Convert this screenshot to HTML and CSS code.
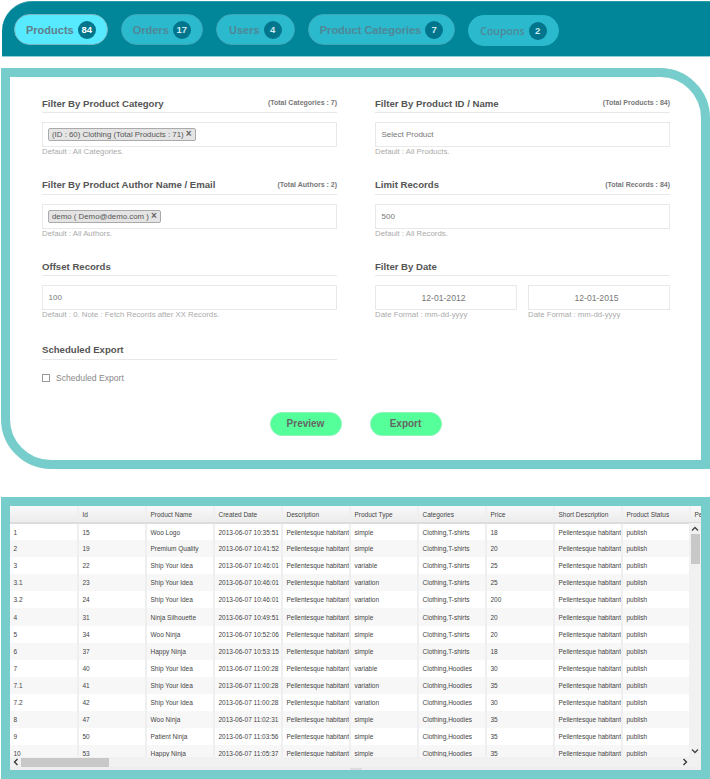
FILE: index.html
```html
<!DOCTYPE html>
<html lang="en">
<head>
<meta charset="utf-8">
<title>Export</title>
<link rel="stylesheet" href="styles.css">
</head>
<body>
<nav class="tabs">
  <a class="tab tab-active">Products<span class="badge">84</span></a>
  <a class="tab">Orders<span class="badge">17</span></a>
  <a class="tab tab-users">Users<span class="badge">4</span></a>
  <a class="tab">Product Categories<span class="badge">7</span></a>
  <a class="tab tab-alt">Coupons<span class="badge">2</span></a>
</nav>

<section class="panel form-panel">
  <div class="form-grid">
    <div class="field">
      <div class="field-head"><h3>Filter By Product Category</h3><span class="total">(Total Categories : 7)</span></div>
      <div class="control"><span class="chip">(ID : 60) Clothing (Total Products : 71) <b>×</b></span></div>
      <p class="help">Default : All Categories.</p>
    </div>
    <div class="field">
      <div class="field-head"><h3>Filter By Product ID / Name</h3><span class="total">(Total Products : 84)</span></div>
      <div class="control text">Select Product</div>
      <p class="help">Default : All Products.</p>
    </div>
    <div class="field">
      <div class="field-head"><h3>Filter By Product Author Name / Email</h3><span class="total">(Total Authors : 2)</span></div>
      <div class="control"><span class="chip">demo ( Demo@demo.com ) <b>×</b></span></div>
      <p class="help">Default : All Authors.</p>
    </div>
    <div class="field">
      <div class="field-head"><h3>Limit Records</h3><span class="total">(Total Records : 84)</span></div>
      <div class="control text">500</div>
      <p class="help">Default : All Records.</p>
    </div>
    <div class="field">
      <div class="field-head"><h3>Offset Records</h3></div>
      <div class="control text">100</div>
      <p class="help">Default : 0. Note : Fetch Records after XX Records.</p>
    </div>
    <div class="field">
      <div class="field-head"><h3>Filter By Date</h3></div>
      <div class="dates">
        <div><div class="control text center">12-01-2012</div><p class="help">Date Format : mm-dd-yyyy</p></div>
        <div><div class="control text center">12-01-2015</div><p class="help">Date Format : mm-dd-yyyy</p></div>
      </div>
    </div>
    <div class="field field-last">
      <div class="field-head"><h3>Scheduled Export</h3></div>
      <label class="check"><span class="box"></span>Scheduled Export</label>
    </div>
  </div>
  <div class="actions">
    <button class="btn">Preview</button>
    <button class="btn">Export</button>
  </div>
</section>

<section class="panel table-panel">
  <div class="grid-main">
    <div class="viewport">
      <table class="data">
        <thead><tr><th></th><th>Id</th><th>Product Name</th><th>Created Date</th><th>Description</th><th>Product Type</th><th>Categories</th><th>Price</th><th>Short Description</th><th>Product Status</th><th>Pe</th></tr></thead>
        <tbody>
          <tr><td>1</td><td>15</td><td>Woo Logo</td><td>2013-06-07 10:35:51</td><td>Pellentesque habitant</td><td>simple</td><td>Clothing,T-shirts</td><td>18</td><td>Pellentesque habitant</td><td>publish</td><td></td></tr>
          <tr><td>2</td><td>19</td><td>Premium Quality</td><td>2013-06-07 10:41:52</td><td>Pellentesque habitant</td><td>simple</td><td>Clothing,T-shirts</td><td>20</td><td>Pellentesque habitant</td><td>publish</td><td></td></tr>
          <tr><td>3</td><td>22</td><td>Ship Your Idea</td><td>2013-06-07 10:46:01</td><td>Pellentesque habitant</td><td>variable</td><td>Clothing,T-shirts</td><td>25</td><td>Pellentesque habitant</td><td>publish</td><td></td></tr>
          <tr><td>3.1</td><td>23</td><td>Ship Your Idea</td><td>2013-06-07 10:46:01</td><td>Pellentesque habitant</td><td>variation</td><td>Clothing,T-shirts</td><td>25</td><td>Pellentesque habitant</td><td>publish</td><td></td></tr>
          <tr><td>3.2</td><td>24</td><td>Ship Your Idea</td><td>2013-06-07 10:46:01</td><td>Pellentesque habitant</td><td>variation</td><td>Clothing,T-shirts</td><td>200</td><td>Pellentesque habitant</td><td>publish</td><td></td></tr>
          <tr><td>4</td><td>31</td><td>Ninja Silhouette</td><td>2013-06-07 10:49:51</td><td>Pellentesque habitant</td><td>simple</td><td>Clothing,T-shirts</td><td>20</td><td>Pellentesque habitant</td><td>publish</td><td></td></tr>
          <tr><td>5</td><td>34</td><td>Woo Ninja</td><td>2013-06-07 10:52:06</td><td>Pellentesque habitant</td><td>simple</td><td>Clothing,T-shirts</td><td>20</td><td>Pellentesque habitant</td><td>publish</td><td></td></tr>
          <tr><td>6</td><td>37</td><td>Happy Ninja</td><td>2013-06-07 10:53:15</td><td>Pellentesque habitant</td><td>simple</td><td>Clothing,T-shirts</td><td>18</td><td>Pellentesque habitant</td><td>publish</td><td></td></tr>
          <tr><td>7</td><td>40</td><td>Ship Your Idea</td><td>2013-06-07 11:00:28</td><td>Pellentesque habitant</td><td>variable</td><td>Clothing,Hoodies</td><td>30</td><td>Pellentesque habitant</td><td>publish</td><td></td></tr>
          <tr><td>7.1</td><td>41</td><td>Ship Your Idea</td><td>2013-06-07 11:00:28</td><td>Pellentesque habitant</td><td>variation</td><td>Clothing,Hoodies</td><td>35</td><td>Pellentesque habitant</td><td>publish</td><td></td></tr>
          <tr><td>7.2</td><td>42</td><td>Ship Your Idea</td><td>2013-06-07 11:00:28</td><td>Pellentesque habitant</td><td>variation</td><td>Clothing,Hoodies</td><td>30</td><td>Pellentesque habitant</td><td>publish</td><td></td></tr>
          <tr><td>8</td><td>47</td><td>Woo Ninja</td><td>2013-06-07 11:02:31</td><td>Pellentesque habitant</td><td>simple</td><td>Clothing,Hoodies</td><td>35</td><td>Pellentesque habitant</td><td>publish</td><td></td></tr>
          <tr><td>9</td><td>50</td><td>Patient Ninja</td><td>2013-06-07 11:03:56</td><td>Pellentesque habitant</td><td>simple</td><td>Clothing,Hoodies</td><td>35</td><td>Pellentesque habitant</td><td>publish</td><td></td></tr>
          <tr><td>10</td><td>53</td><td>Happy Ninja</td><td>2013-06-07 11:05:37</td><td>Pellentesque habitant</td><td>simple</td><td>Clothing,Hoodies</td><td>35</td><td>Pellentesque habitant</td><td>publish</td><td></td></tr>
        </tbody>
      </table>
    </div>
    <div class="vbar">
      <svg class="arrow" viewBox="0 0 8 6"><path d="M1 4.5 4 1.5 7 4.5" fill="none" stroke="#444" stroke-width="1.3"/></svg>
      <div class="vthumb"></div>
      <svg class="arrow arrow-end" viewBox="0 0 8 6"><path d="M1 1.5 4 4.5 7 1.5" fill="none" stroke="#444" stroke-width="1.3"/></svg>
    </div>
  </div>
  <div class="hbar">
    <svg class="harrow" viewBox="0 0 6 8"><path d="M4.5 1 1.5 4 4.5 7" fill="none" stroke="#333" stroke-width="1.3"/></svg>
    <div class="hthumb"></div>
    <svg class="harrow harrow-end" viewBox="0 0 6 8"><path d="M1.5 1 4.5 4 1.5 7" fill="none" stroke="#333" stroke-width="1.3"/></svg>
  </div>
  <div class="grip-strip"><span class="grip"></span></div>
</section>
</body>
</html>
```

FILE: styles.css
```css
* { box-sizing: border-box; }
html, body { margin: 0; padding: 0; background: #fff; overflow: hidden; }
body { width: 710px; height: 779px; font-family: "Liberation Sans", Arial, sans-serif; color: #666; }

.tabs {
  display: flex;
  gap: 13px;
  height: 56px;
  margin: 1px 0 0 2px;
  padding: 12px 12px 0;
  background: #008599;
  border-top: 1px solid #2a9bab;
  border-bottom: 1px solid #8fd0da;
  border-top-left-radius: 30px;
}
.tab {
  display: flex;
  align-items: center;
  justify-content: center;
  gap: 4px;
  height: 31px;
  padding: 0 11px;
  border-radius: 16px;
  background: #2bb9cd;
  border: 1px solid #3fa7b8;
  color: #4f8796;
  font-size: 11px;
  font-weight: bold;
  white-space: nowrap;
}
.tab-active { background: #57eaff; border-color: #7ab9c4; color: #5f7f8b; }
.tab-users { min-width: 79px; }
.tab-alt { margin-top: 1px; border-color: #2bb9cd; font-family: "Open Sans", sans-serif; font-weight: 600; font-size: 10.5px; }
.badge {
  display: flex;
  align-items: center;
  justify-content: center;
  width: 18px;
  height: 18px;
  border-radius: 50%;
  background: #00758b;
  color: #cfe9ee;
  font-family: "Liberation Sans", Arial, sans-serif;
  font-size: 9.5px;
  font-weight: bold;
}
.tab-active .badge { color: #fff; }

.panel { margin-left: 1px; border: 9px solid #77cdcb; background: #fff; }
.form-panel {
  height: 401px;
  margin-top: 11px;
  padding: 19px 32px 0;
  border-top-right-radius: 50px;
  border-bottom-left-radius: 50px;
}
.form-grid {
  display: grid;
  grid-template-columns: 295px 295px;
  grid-template-rows: repeat(3, 81.5px) 67px;
  column-gap: 38px;
}
.field-last { grid-column: 1; padding-top: 1px; }
.field-head {
  display: flex;
  justify-content: space-between;
  align-items: center;
  height: 17px;
  border-bottom: 1px solid #e8e8e8;
  margin-bottom: 9px;
}
.field-last .field-head { height: 18px; }
.field-head h3 { margin: 0; font-size: 9.6px; font-weight: bold; color: #555; padding-bottom: 2px; }
.total { font-size: 7px; font-weight: bold; color: #777; padding-bottom: 3px; }
.control {
  display: flex;
  align-items: center;
  height: 25px;
  border: 1px solid #e9e9e9;
  padding: 0 5px;
  background: #fff;
}
.control.text { padding-left: 5.5px; font-size: 8px; color: #777; }
.control.center { justify-content: center; font-size: 8.6px; padding-left: 0; }
.chip {
  display: inline-block;
  height: 13px;
  line-height: 11px;
  padding: 0 3px;
  background: #e4e4e4;
  border: 1px solid #aaa;
  border-radius: 2px;
  font-size: 7.85px;
  color: #555;
}
.chip b { color: #666; font-size: 10px; line-height: 10px; }
.help { margin: 0; font-size: 7.8px; line-height: 10px; color: #aaa; }
.dates { display: grid; grid-template-columns: 142px 142px; column-gap: 11px; }

.check { display: flex; align-items: center; gap: 6px; margin-top: 13px; font-size: 8.6px; color: #888; }
.box { width: 8px; height: 8px; border: 1px solid #999; background: #fff; }

.actions { display: flex; justify-content: center; gap: 28px; margin-top: 4px; }
.btn {
  width: 72px;
  height: 24px;
  border: 1px solid #8cf5bb;
  border-radius: 12px;
  background: #55ff99;
  color: #666;
  font-family: inherit;
  font-size: 10px;
  font-weight: bold;
  padding: 0;
}

.table-panel { height: 282px; margin-top: 28px; display: flex; flex-direction: column; background: #eee; }
.grid-main { position: relative; height: 251px; }
.viewport { width: 691px; height: 251px; overflow: hidden; background: #fff; }
.data { border-collapse: collapse; table-layout: fixed; width: 748px; font-size: 6.5px; color: #444; }
.data th, .data td { width: 68px; padding: 0 0 0 3.5px; text-align: left; white-space: nowrap; overflow: hidden; border-right: 2px solid #efefef; }
.data th { height: 17px; font-weight: normal; background: linear-gradient(#f9f9f9, #ececec); border-bottom: 2px solid #dcdcdc; color: #444; }
.data td { height: 17.1px; }
.data tbody tr:nth-child(even) td { background: #f7f7f7; }
.vbar { position: absolute; top: 17px; right: 0; bottom: 0; width: 12px; display: flex; flex-direction: column; background: #f1f1f1; padding-left: 2px; }
.arrow { width: 8px; height: 6px; margin-top: 3px; margin-bottom: 2px; }
.arrow-end { margin-top: auto; margin-bottom: 3px; }
.vthumb { width: 9px; height: 30px; background: #c8c8c8; }
.hbar { display: flex; align-items: center; height: 10px; background: #f1f1f1; padding: 0 3px; }
.harrow { width: 6px; height: 8px; }
.harrow-end { margin-left: auto; margin-right: 10px; }
.hthumb { width: 88px; height: 9px; margin-left: 2px; background: #c8c8c8; }
.grip-strip { flex: 1; display: flex; justify-content: center; align-items: center; background: #eee; }
.grip { width: 12px; height: 2px; background: #ddd; }
```
